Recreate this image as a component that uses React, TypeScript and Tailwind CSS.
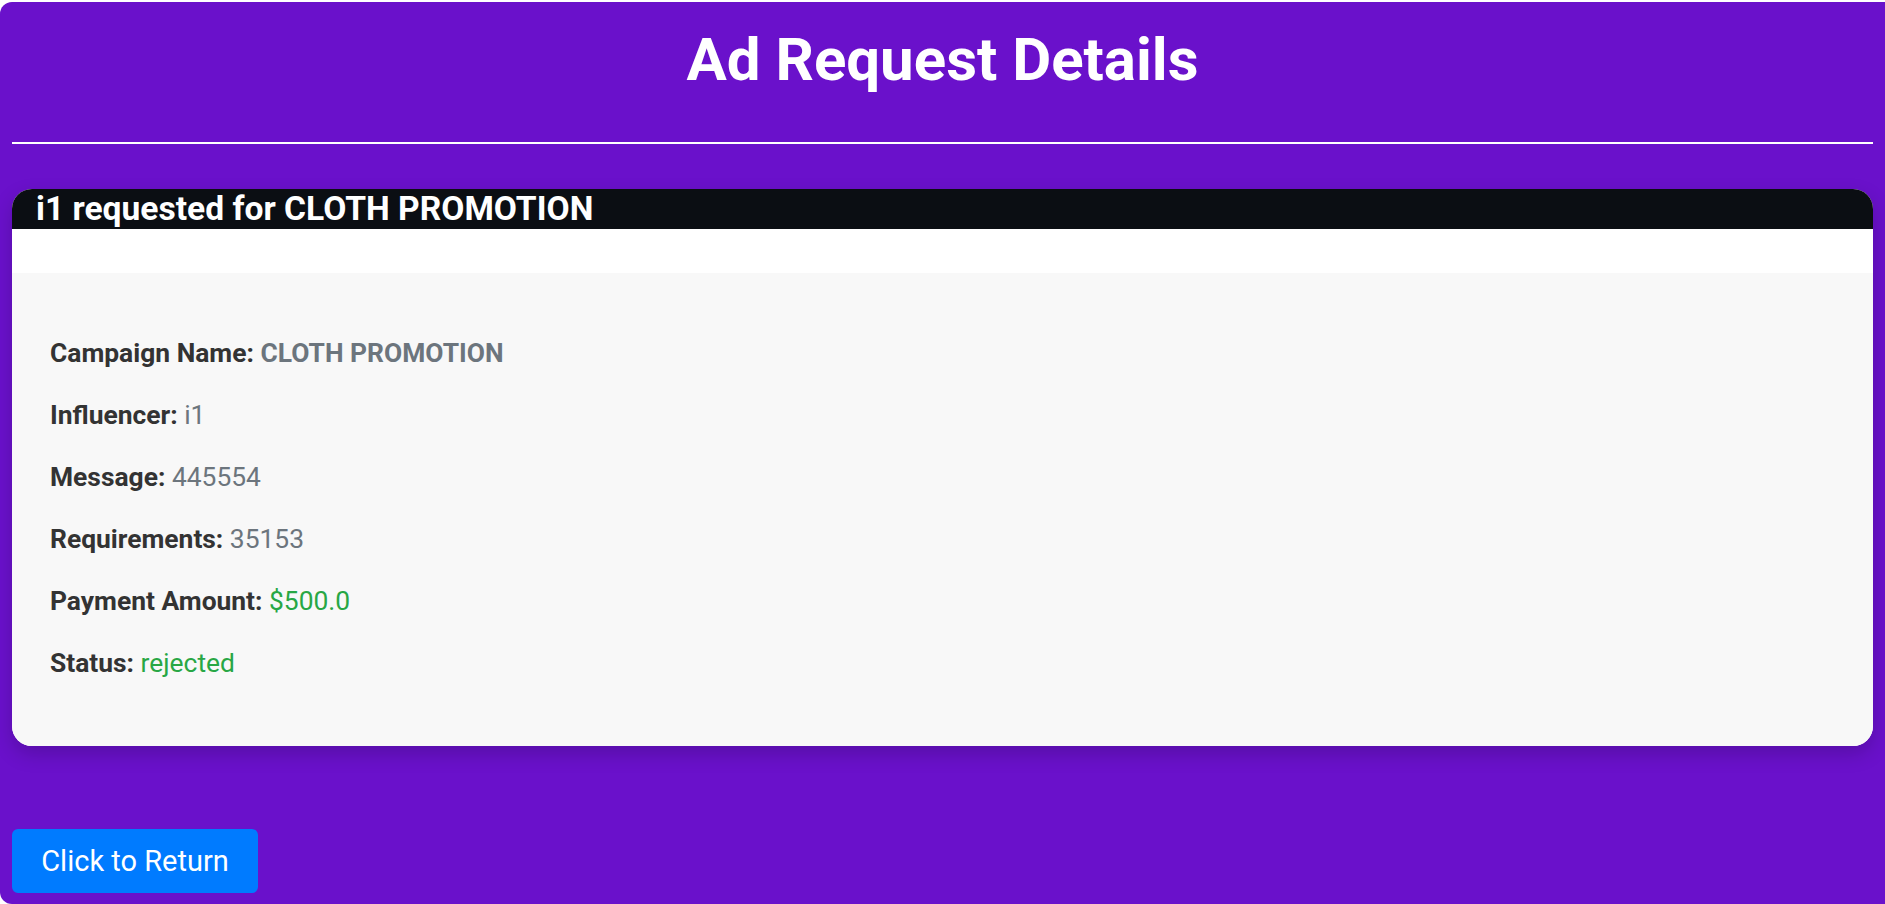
import React from "react";

export default function App() {
  const rows: { label: string; value: string; cls: string }[] = [
    { label: "Campaign Name:", value: "CLOTH PROMOTION", cls: "text-[#6c757d] font-bold" },
    { label: "Influencer:", value: "i1", cls: "text-[#6c757d]" },
    { label: "Message:", value: "445554", cls: "text-[#6c757d]" },
    { label: "Requirements:", value: "35153", cls: "text-[#6c757d]" },
    { label: "Payment Amount:", value: "$500.0", cls: "text-[#28a745]" },
    { label: "Status:", value: "rejected", cls: "text-[#28a745]" },
  ];
  return (
    <div className="bg-white pt-[2px] h-[904px] overflow-hidden" style={{ fontFamily: "Roboto, 'Noto Sans', sans-serif" }}>
      <div className="bg-[#6a11cb] rounded-l-[12px] h-[902px] px-[12px] pt-[22px] flex flex-col">
        <h1 className="text-white font-bold text-[60px] leading-[72px] text-center">Ad Request Details</h1>
        <div className="mt-[46px] h-[2px] bg-white" />
        <div className="mt-[45px] rounded-[20px] overflow-hidden bg-white shadow-[0_8px_20px_rgba(0,0,0,0.18)]">
          <div className="h-[40px] bg-[#0b0e13] pl-[24px] text-white font-bold text-[33.6px] leading-[40px]">
            i1 requested for CLOTH PROMOTION
          </div>
          <div className="h-[44px] bg-white" />
          <div className="bg-[#f8f8f8] pt-[62px] pb-[65px] pl-[38px] flex flex-col gap-[26px]">
            {rows.map((r) => (
              <p key={r.label} className="text-[26.4px] leading-[36px] text-[#333333]">
                <span className="font-bold">{r.label}</span> <span className={r.cls}>{r.value}</span>
              </p>
            ))}
          </div>
        </div>
        <div className="mt-[83px]">
          <button className="w-[246px] h-[64px] bg-[#007bff] rounded-[6px] text-white text-[29px] leading-[64px] text-center">
            Click to Return
          </button>
        </div>
      </div>
    </div>
  );
}
